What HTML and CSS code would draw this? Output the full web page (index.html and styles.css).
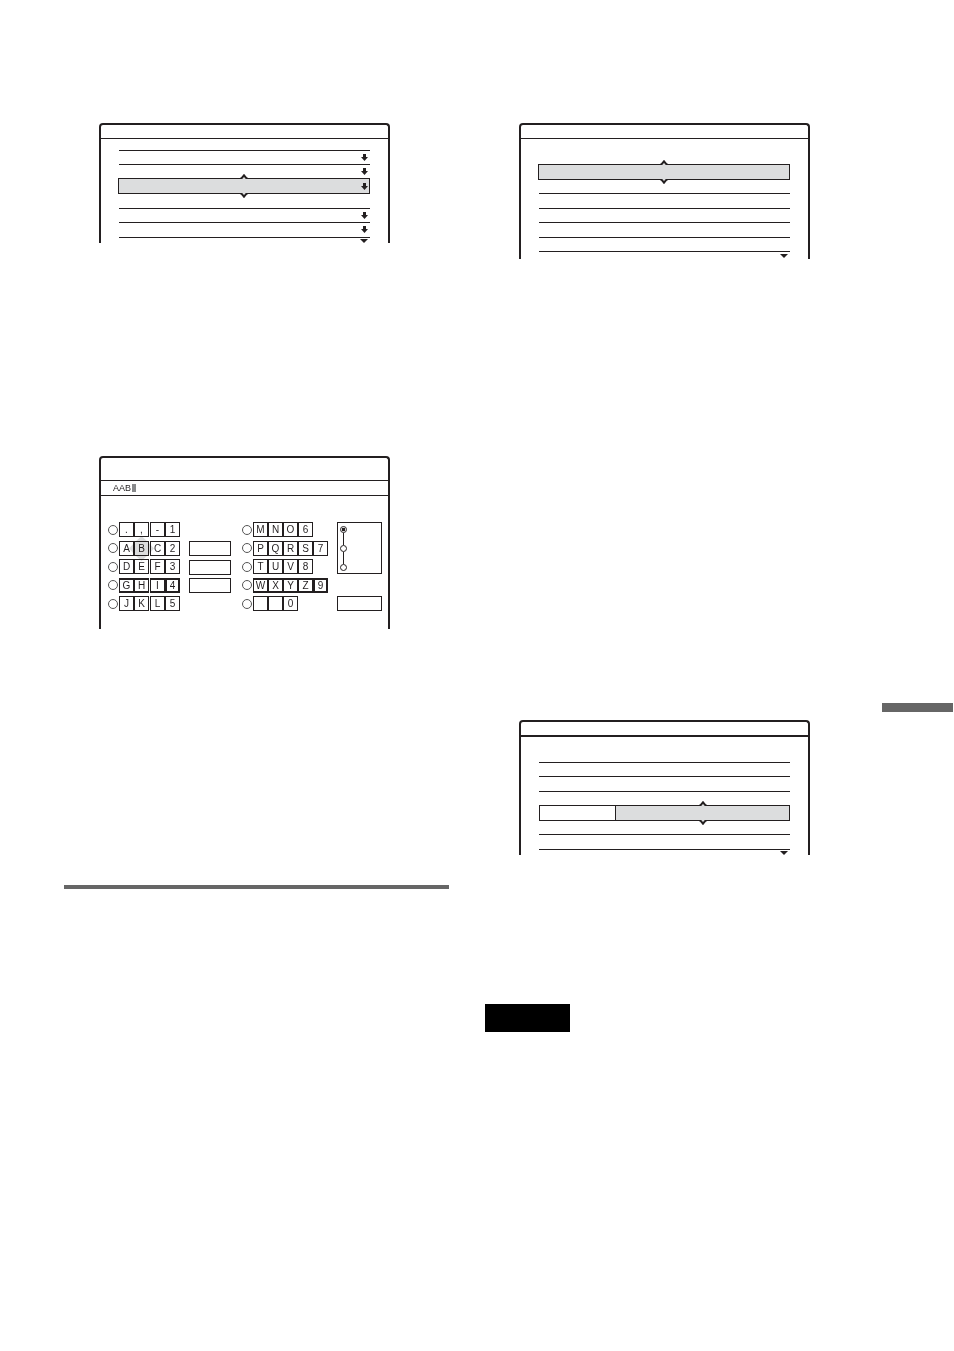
FILE: index.html
```
<!DOCTYPE html>
<html lang="en">
<head>
    <meta charset="utf-8">
    <title>Menu screens</title>
    <meta name="viewport" content="width=device-width, initial-scale=1">
    <link rel="stylesheet" href="styles.css">
</head>
<body>
<svg class="defs" aria-hidden="true">
    <symbol id="down" viewBox="0 0 7 7"><path d="M2 0h3v3h2L3.500 7 0 3h2z"/></symbol>
    <symbol id="more" viewBox="0 0 8 4"><path d="M0 0h8L4 4z"/></symbol>
    <symbol id="caret" viewBox="0 0 8 5"><path class="fill" d="M1 5 4 1l3 4z"/><path class="edge" d="M.5 4.3H1.500L4 1.3l2.500 3h1"/></symbol>
</svg>
<main class="page">
    <div class="column">
        <section class="screen">
            <div class="title"></div>
            <div class="list">
                <div class="row"><svg class="down"><use href="#down"/></svg></div>
                <div class="row"><svg class="down"><use href="#down"/></svg></div>
                <div class="row selected">
                    <svg class="caret up"><use href="#caret"/></svg>
                    <svg class="down"><use href="#down"/></svg>
                    <svg class="caret under"><use href="#caret"/></svg>
                </div>
                <div class="row blank"></div>
                <div class="row"><svg class="down"><use href="#down"/></svg></div>
                <div class="row tall"><svg class="down"><use href="#down"/></svg></div>
                <div class="row end"><svg class="more"><use href="#more"/></svg></div>
            </div>
        </section>

        <section class="screen keyboard">
            <div class="title"></div>
            <div class="entry">AAB<span class="cursor"></span></div>
            <div class="pad">
                <div class="keys split">
                    <div class="line"><i></i><button>.</button><button>,</button><button>-</button><button>1</button></div>
                    <div class="line"><i></i><button>A</button><button class="current">B<svg class="glow" viewBox="0 0 25 25"><path d="M12.500 0 19 6v2.500l1-1.500 5 5.500-5 5.500-1-1.500V19l-6.500 6L6 19v-2.500L5 18l-5-5.500L5 7l1 1.500V6z"/></svg></button><button>C</button><button>2</button></div>
                    <div class="line"><i></i><button>D</button><button>E</button><button>F</button><button>3</button></div>
                    <div class="line heavy"><i></i><button>G</button><button>H</button><button>I</button><button>4</button></div>
                    <div class="line"><i></i><button>J</button><button>K</button><button>L</button><button>5</button></div>
                </div>
                <div class="actions">
                    <button aria-label="Action 1"></button>
                    <button aria-label="Action 2"></button>
                    <button aria-label="Action 3"></button>
                </div>
                <div class="keys">
                    <div class="line"><i></i><button>M</button><button>N</button><button>O</button><button>6</button></div>
                    <div class="line"><i></i><button>P</button><button>Q</button><button>R</button><button>S</button><button>7</button></div>
                    <div class="line"><i></i><button>T</button><button>U</button><button>V</button><button>8</button></div>
                    <div class="line heavy"><i></i><button>W</button><button>X</button><button>Y</button><button>Z</button><button>9</button></div>
                    <div class="line"><i></i><button aria-label="Blank"></button><button aria-label="Space"></button><button>0</button></div>
                </div>
                <div class="modes">
                    <div class="options">
                        <input type="radio" name="mode" aria-label="Mode 1" checked>
                        <span class="link"></span>
                        <input type="radio" name="mode" aria-label="Mode 2">
                        <span class="link"></span>
                        <input type="radio" name="mode" aria-label="Mode 3">
                    </div>
                    <button aria-label="Finish"></button>
                </div>
            </div>
        </section>

        <hr class="divider">
    </div>

    <div class="column right">
        <section class="screen">
            <div class="title"></div>
            <div class="list low">
                <div class="row selected">
                    <svg class="caret up"><use href="#caret"/></svg>
                    <svg class="caret under"><use href="#caret"/></svg>
                </div>
                <div class="row blank short"></div>
                <div class="row tall"></div>
                <div class="row"></div>
                <div class="row tall"></div>
                <div class="row"></div>
                <div class="row end deep"><svg class="more"><use href="#more"/></svg></div>
            </div>
        </section>

        <section class="screen setting">
            <div class="title thick"></div>
            <div class="list low">
                <div class="row"></div>
                <div class="row tall"></div>
                <div class="row"></div>
                <div class="pair">
                    <div class="name"></div>
                    <div class="row selected">
                        <svg class="caret up"><use href="#caret"/></svg>
                        <svg class="caret under"><use href="#caret"/></svg>
                    </div>
                </div>
                <div class="row blank short"></div>
                <div class="row tall"></div>
                <div class="row end"><svg class="more"><use href="#more"/></svg></div>
            </div>
        </section>

        <div class="note"></div>
    </div>

    <aside class="tab"></aside>
</main>
</body>
</html>
```
FILE: styles.css
```
:root {
    --ink: #231f20;
    --shade: #dcddde;
    --gray: #666;
}

* {
    box-sizing: border-box;
}

body {
    margin: 0;
    background: white;
    color: var(--ink);
    font-family: "Liberation Sans", Arial, sans-serif;
    font-size: 9px;
}

svg {
    display: block;
    fill: var(--ink);
}

.defs {
    position: absolute;
    width: 0;
    height: 0;
}

.page {
    display: grid;
    grid-template-columns: 385fr 433fr 71px;
    padding: 123px 1px 319px 64px;
}

.right {
    margin: 0 12px 0 36px;
}

/* menu screens, open at the bottom */
.screen {
    margin: 0 59px 0 35px;
    border: 2px solid var(--ink);
    border-bottom: 0;
    border-radius: 4px 4px 0 0;
}

.right .screen {
    margin: 0 60px 0 34px;
}

.title {
    height: 14px;
    border-bottom: 1px solid var(--ink);
}

.title.thick {
    height: 15px;
    border-bottom-width: 2px;
}

.list {
    padding: 11px 18px 0;
}

.list.low {
    padding-top: 25px;
}

.row {
    position: relative;
    display: flex;
    justify-content: flex-end;
    align-items: center;
    height: 14px;
    padding-right: 2px;
    border-top: 1px solid var(--ink);
}

.row.tall {
    height: 15px;
    padding-bottom: 1px;
}

.row.blank {
    border: 0;
}

.row.short {
    height: 13px;
}

.row.end {
    height: 6px;
}

.row.deep {
    height: 8px;
}

.row.selected {
    height: 16px;
    margin-left: -1px;
    padding-right: 1px;
    border: 1px solid var(--ink);
    background: var(--shade);
}

.down {
    width: 7px;
    height: 7px;
}

.more {
    width: 8px;
    height: 4px;
}

.caret {
    position: absolute;
    left: calc(50% - 4px);
    width: 8px;
    height: 5px;
}

.fill {
    fill: var(--shade);
}

.edge {
    fill: none;
    stroke: var(--ink);
    stroke-width: 2;
}

.up {
    top: -5px;
}

.under {
    bottom: -5px;
    transform: rotate(180deg);
}

.pair {
    display: grid;
    grid-template-columns: 77fr 174fr;
}

.name {
    border: 1px solid var(--ink);
}

/* character input */
.keyboard {
    margin-top: 213px;
}

.keyboard .title {
    height: 23px;
}

.entry {
    display: flex;
    align-items: center;
    height: 15px;
    padding-left: 12px;
    border-bottom: 1px solid var(--ink);
}

.cursor {
    width: 4px;
    height: 8px;
    margin: 0 0 1px 1px;
    background: #88898b;
}

.pad {
    display: grid;
    grid-template-columns: 72px 44px 86px 45px;
    justify-content: space-between;
    height: 133px;
    padding: 26px 6px 18px 7px;
}

.keys {
    display: flex;
    flex-direction: column;
    justify-content: space-between;
}

.line {
    display: flex;
    align-items: center;
}

.line i {
    width: 10px;
    height: 10px;
    margin-right: 1px;
    border: 1px solid #555;
    border-radius: 50%;
}

button {
    padding: 0;
    border: 1px solid var(--ink);
    border-radius: 0;
    background: white;
    color: var(--ink);
    font: inherit;
}

.line button {
    width: 15px;
    height: 15px;
    font-size: 10px;
    line-height: 13px;
}

.split button:nth-of-type(3) {
    margin-left: 1px;
}

.line.heavy button {
    border-width: 2px 1px;
    line-height: 11px;
}

.line.heavy button:last-child {
    border-width: 2px;
}

.current {
    position: relative;
}

/* cursor arrows spread over the neighbouring keys */
.glow {
    position: absolute;
    top: -6px;
    left: -6px;
    width: 25px;
    height: 25px;
    fill: var(--shade);
    mix-blend-mode: multiply;
}

.actions {
    display: flex;
    flex-direction: column;
    justify-content: space-between;
    padding: 19px 0 18px;
}

.actions button {
    width: 42px;
    height: 15px;
}

.modes {
    display: flex;
    flex-direction: column;
    justify-content: space-between;
}

.modes button {
    height: 15px;
}

.options {
    display: flex;
    flex-direction: column;
    align-items: flex-start;
    height: 52px;
    padding: 3px 2px 2px;
    border: 1px solid var(--ink);
}

.options input {
    appearance: none;
    width: 7px;
    height: 7px;
    margin: 0;
    border: 1px solid var(--ink);
    border-radius: 50%;
}

.options input:checked {
    background: radial-gradient(var(--ink) 40%, white 60%);
}

.link {
    flex: 1;
    width: 1px;
    margin-left: 3px;
    background: var(--ink);
}

.divider {
    height: 4px;
    margin: 256px 0 0;
    border: 0;
    background: var(--gray);
}

.right .setting {
    margin-top: 461px;
}

.note {
    width: 85px;
    height: 28px;
    margin-top: 149px;
    background: black;
}

.tab {
    height: 9px;
    margin-top: 580px;
    background: var(--gray);
}
```
